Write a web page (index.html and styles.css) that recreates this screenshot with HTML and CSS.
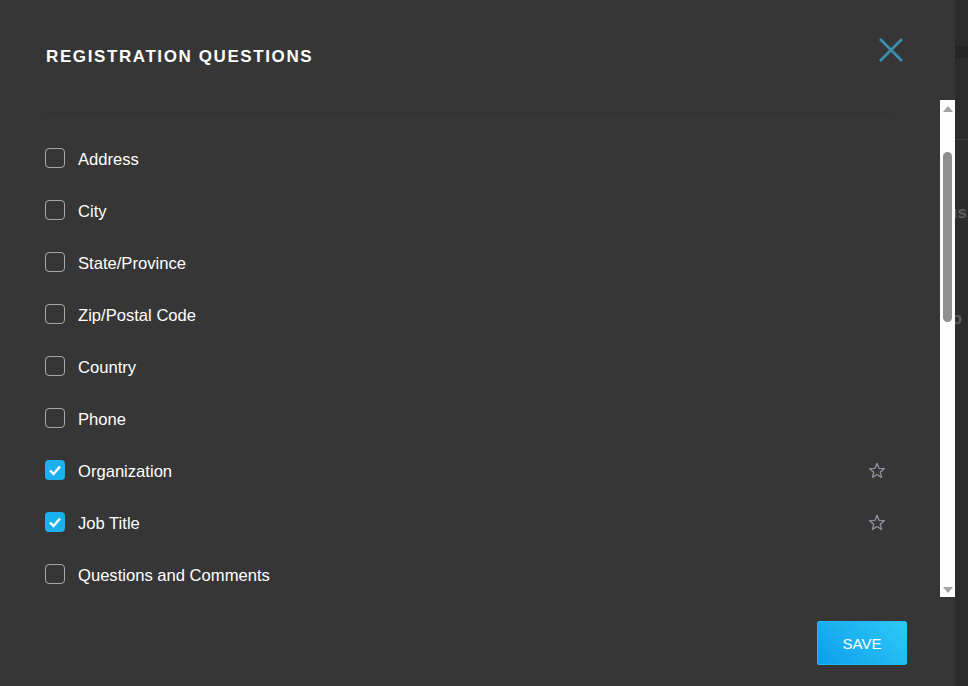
FILE: index.html
```html
<!DOCTYPE html>
<html lang="en">

<head>
    <meta charset="UTF-8">
    <meta name="viewport" content="width=device-width, initial-scale=1.0">
    <title>Registration Questions</title>
    <link rel="stylesheet" href="styles.css">
</head>

<body>
    <div class="page">
        <div class="modal">
            <div class="modal-header">
                <h2 class="modal-title">REGISTRATION QUESTIONS</h2>
                <button class="close-btn" type="button" aria-label="Close">
                    <svg width="24" height="24" viewBox="0 0 24 24">
                        <path d="M1 1 L23 23 M23 1 L1 23" stroke="#3a90ae" stroke-width="2.6" fill="none" />
                    </svg>
                </button>
            </div>

            <div class="modal-body">
                <div class="question-list">
                    <div class="divider"></div>

                    <label class="question">
                        <span class="box"></span>
                        <span class="question-name">Address</span>
                    </label>
                    <label class="question">
                        <span class="box"></span>
                        <span class="question-name">City</span>
                    </label>
                    <label class="question">
                        <span class="box"></span>
                        <span class="question-name">State/Province</span>
                    </label>
                    <label class="question">
                        <span class="box"></span>
                        <span class="question-name">Zip/Postal Code</span>
                    </label>
                    <label class="question">
                        <span class="box"></span>
                        <span class="question-name">Country</span>
                    </label>
                    <label class="question">
                        <span class="box"></span>
                        <span class="question-name">Phone</span>
                    </label>
                    <label class="question">
                        <span class="box checked">
                            <svg width="20" height="20" viewBox="0 0 20 20">
                                <path d="M5 10.5 L8.5 14 L15 6.5" stroke="#fff" stroke-width="2.4" fill="none" />
                            </svg>
                        </span>
                        <span class="question-name">Organization</span>
                        <svg class="star" width="18" height="17" viewBox="0 0 24 23">
                            <path d="M12 1.8 L14.7 8.6 L22 9 L16.4 13.7 L18.2 20.8 L12 16.9 L5.8 20.8 L7.6 13.7 L2 9 L9.3 8.6 Z" stroke="#8d909c" stroke-width="1.8" fill="none" stroke-linejoin="round" />
                        </svg>
                    </label>
                    <label class="question">
                        <span class="box checked">
                            <svg width="20" height="20" viewBox="0 0 20 20">
                                <path d="M5 10.5 L8.5 14 L15 6.5" stroke="#fff" stroke-width="2.4" fill="none" />
                            </svg>
                        </span>
                        <span class="question-name">Job Title</span>
                        <svg class="star" width="18" height="17" viewBox="0 0 24 23">
                            <path d="M12 1.8 L14.7 8.6 L22 9 L16.4 13.7 L18.2 20.8 L12 16.9 L5.8 20.8 L7.6 13.7 L2 9 L9.3 8.6 Z" stroke="#8d909c" stroke-width="1.8" fill="none" stroke-linejoin="round" />
                        </svg>
                    </label>
                    <label class="question">
                        <span class="box"></span>
                        <span class="question-name">Questions and Comments</span>
                    </label>
                </div>

                <!-- scrollbar of the list -->
                <div class="scrollbar">
                    <span class="arrow-up"></span>
                    <span class="thumb"></span>
                    <span class="arrow-down"></span>
                </div>
            </div>

            <div class="modal-footer">
                <button class="save-btn" type="button">SAVE</button>
            </div>
        </div>

        <div class="backdrop">
            <div class="backdrop-bar"></div>
            <div class="backdrop-line"></div>
            <div class="backdrop-text first">us</div>
            <div class="backdrop-text second">io</div>
        </div>
    </div>
</body>

</html>
```

FILE: styles.css
```css
* {
    box-sizing: border-box;
}

body {
    margin: 0;
    font-family: "Liberation Sans", Arial, sans-serif;
    background-color: #2c2c2c;
    overflow: hidden;
}

.page {
    display: flex;
    height: 686px;
}

.modal {
    width: 955px;
    height: 686px;
    background-color: #363636;
    display: flex;
    flex-direction: column;
    flex-shrink: 0;
}

.modal-header {
    height: 100px;
    display: flex;
    justify-content: space-between;
    align-items: flex-start;
    padding: 38px 52px 0 46px;
}

.modal-title {
    margin: 9px 0 0 0;
    font-size: 17px;
    line-height: 20px;
    font-weight: bold;
    letter-spacing: 1.6px;
    color: #ffffff;
}

.close-btn {
    background: none;
    border: none;
    padding: 0;
    width: 24px;
    height: 24px;
    cursor: pointer;
}

.close-btn svg {
    display: block;
}

.modal-body {
    height: 497px;
    display: flex;
    overflow: hidden;
}

.question-list {
    flex: 1;
    padding: 0 48px 0 44px;
    overflow: hidden;
}

.divider {
    margin-top: 13px;
    border-top: 1px solid #2f2f2f;
    margin-bottom: 20px;
}

.question {
    height: 52px;
    display: flex;
    align-items: center;
    padding: 0 6px 0 1px;
    cursor: pointer;
}

.box {
    width: 20px;
    height: 20px;
    border: 1.5px solid #a9a9ad;
    border-radius: 4px;
    flex-shrink: 0;
    margin-top: -4px;
}

.box.checked {
    border: none;
    background-color: #1bb1ef;
}

.box svg {
    display: block;
}

.question-name {
    margin-left: 13px;
    font-size: 16.6px;
    color: #ffffff;
}

.star {
    margin-left: auto;
    margin-top: -3px;
}

.scrollbar {
    width: 15px;
    background-color: #fdfdfd;
    display: flex;
    flex-direction: column;
    align-items: center;
}

.arrow-up {
    margin-top: 6px;
    width: 0;
    height: 0;
    border-left: 5px solid transparent;
    border-right: 5px solid transparent;
    border-bottom: 6px solid #a3a3a3;
}

.thumb {
    margin-top: 40px;
    width: 9px;
    height: 170px;
    border-radius: 5px;
    background-color: #8f8f8f;
}

.arrow-down {
    margin-top: auto;
    margin-bottom: 4px;
    width: 0;
    height: 0;
    border-left: 5px solid transparent;
    border-right: 5px solid transparent;
    border-top: 6px solid #a3a3a3;
}

.modal-footer {
    display: flex;
    justify-content: flex-end;
    padding: 24px 48px 0 0;
}

.save-btn {
    width: 90px;
    height: 44px;
    border: 1px solid #22bdf5;
    border-radius: 2px;
    background: linear-gradient(45deg, #0f9eec, #2ec8f6);
    color: #ffffff;
    font-family: "Liberation Sans", Arial, sans-serif;
    font-size: 15px;
    cursor: pointer;
}

.backdrop {
    flex: 1;
    overflow: hidden;
    display: flex;
    flex-direction: column;
}

.backdrop-bar {
    margin-top: 46px;
    height: 12px;
    background-color: #252525;
}

.backdrop-line {
    margin-top: 81px;
    border-top: 1px solid #3c3c3c;
}

.backdrop-text {
    font-size: 17px;
    font-weight: bold;
    color: #5c5c5c;
    margin-left: -8px;
    white-space: nowrap;
}

.backdrop-text.first {
    margin-top: 63px;
}

.backdrop-text.second {
    margin-top: 86px;
}
```
